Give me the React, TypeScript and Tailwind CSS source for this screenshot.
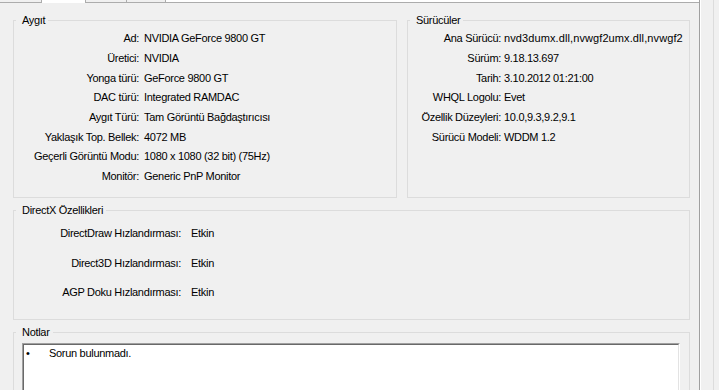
import React from "react";

function GroupBox({
  title,
  className,
  children,
}: {
  title: string;
  className?: string;
  children?: React.ReactNode;
}) {
  return (
    <div className={"relative border border-[#dcdcdc] " + (className ?? "")}>
      <span className="absolute left-[2px] top-[-7px] h-[13px] leading-[13px] bg-[#f0f0f0] pl-[6px] pr-[3px] whitespace-nowrap">
        {title}
      </span>
      {children}
    </div>
  );
}

const device: [string, string][] = [
  ["Ad:", "NVIDIA GeForce 9800 GT"],
  ["Üretici:", "NVIDIA"],
  ["Yonga türü:", "GeForce 9800 GT"],
  ["DAC türü:", "Integrated RAMDAC"],
  ["Aygıt Türü:", "Tam Görüntü Bağdaştırıcısı"],
  ["Yaklaşık Top. Bellek:", "4072 MB"],
  ["Geçerli Görüntü Modu:", "1080 x 1080 (32 bit) (75Hz)"],
  ["Monitör:", "Generic PnP Monitor"],
];

const drivers: [string, string][] = [
  ["Ana Sürücü:", "nvd3dumx.dll,nvwgf2umx.dll,nvwgf2"],
  ["Sürüm:", "9.18.13.697"],
  ["Tarih:", "3.10.2012 01:21:00"],
  ["WHQL Logolu:", "Evet"],
  ["Özellik Düzeyleri:", "10.0,9.3,9.2,9.1"],
  ["Sürücü Modeli:", "WDDM 1.2"],
];

const dx: [string, string][] = [
  ["DirectDraw Hızlandırması:", "Etkin"],
  ["Direct3D Hızlandırması:", "Etkin"],
  ["AGP Doku Hızlandırması:", "Etkin"],
];

export default function App() {
  return (
    <div className="w-[719px] h-[390px] overflow-hidden bg-[#f0f0f0] flex font-['Liberation_Sans',Arial,sans-serif] text-[11px] leading-[13px] tracking-[-0.3px] text-black">
      <div className="w-[700px] shrink-0 flex flex-col border-r border-[#a0a0a0]">
        <div className="h-[3px] flex shrink-0">
          <div className="w-[42px] bg-[#f0f0f0] border-r border-b border-[#acacac]" />
          <div className="w-[44px] bg-white border-r border-[#acacac]" />
          <div className="w-[41px] bg-[#f0f0f0] border-r border-b border-[#acacac]" />
          <div className="w-[39px] bg-[#f0f0f0] border-r border-b border-[#acacac]" />
          <div className="flex-1 bg-white border-b border-[#acacac]" />
        </div>
        <div className="flex-1 pt-[17px] pl-[13px] pr-[9px] flex flex-col gap-[12px]">
          <div className="flex gap-[10px] h-[178px] shrink-0">
            <GroupBox title="Aygıt" className="w-[384px] pt-[8px]">
              <div className="grid grid-cols-[125px_1fr] gap-x-[5px]">
                {device.map(([k, v]) => (
                  <React.Fragment key={k}>
                    <div className="h-[19.7px] flex items-center justify-end whitespace-nowrap">{k}</div>
                    <div className="h-[19.7px] flex items-center whitespace-nowrap">{v}</div>
                  </React.Fragment>
                ))}
              </div>
            </GroupBox>
            <GroupBox title="Sürücüler" className="flex-1 pt-[8px]">
              <div className="grid grid-cols-[93px_1fr] gap-x-[3px]">
                {drivers.map(([k, v], i) => (
                  <React.Fragment key={k}>
                    <div className="h-[19.7px] flex items-center justify-end whitespace-nowrap">{k}</div>
                    <div
                      className={
                        i === 0
                          ? "h-[19.7px] flex items-center whitespace-nowrap tracking-[0.1px]"
                          : "h-[19.7px] flex items-center whitespace-nowrap"
                      }
                    >
                      {v}
                    </div>
                  </React.Fragment>
                ))}
              </div>
            </GroupBox>
          </div>
          <GroupBox title="DirectX Özellikleri" className="h-[110px] shrink-0 pt-[8px]">
            <div className="grid grid-cols-[167px_1fr] gap-x-[10px]">
              {dx.map(([k, v]) => (
                <React.Fragment key={k}>
                  <div className="h-[29.5px] flex items-center justify-end whitespace-nowrap">{k}</div>
                  <div className="h-[29.5px] flex items-center whitespace-nowrap">{v}</div>
                </React.Fragment>
              ))}
            </div>
          </GroupBox>
          <GroupBox title="Notlar" className="h-[90px] shrink-0 pt-[10px] pl-[8px] pr-[9px]">
            <div className="h-[70px] border-t border-l border-[#a0a0a0] border-r-white border-b-white border-r border-b">
              <div className="h-full bg-white border-t border-l border-[#696969] border-r border-b border-r-[#e3e3e3] border-b-[#e3e3e3] pt-[2px] pl-[2px] flex">
                <span className="w-[23px] shrink-0">•</span>
                <span>Sorun bulunmadı.</span>
              </div>
            </div>
          </GroupBox>
        </div>
      </div>
      <div className="w-[1px] shrink-0 bg-white" />
      <div className="w-[12px] shrink-0" />
      <div className="w-[1px] shrink-0 bg-[#dcdcdc]" />
      <div className="flex-1" />
    </div>
  );
}
